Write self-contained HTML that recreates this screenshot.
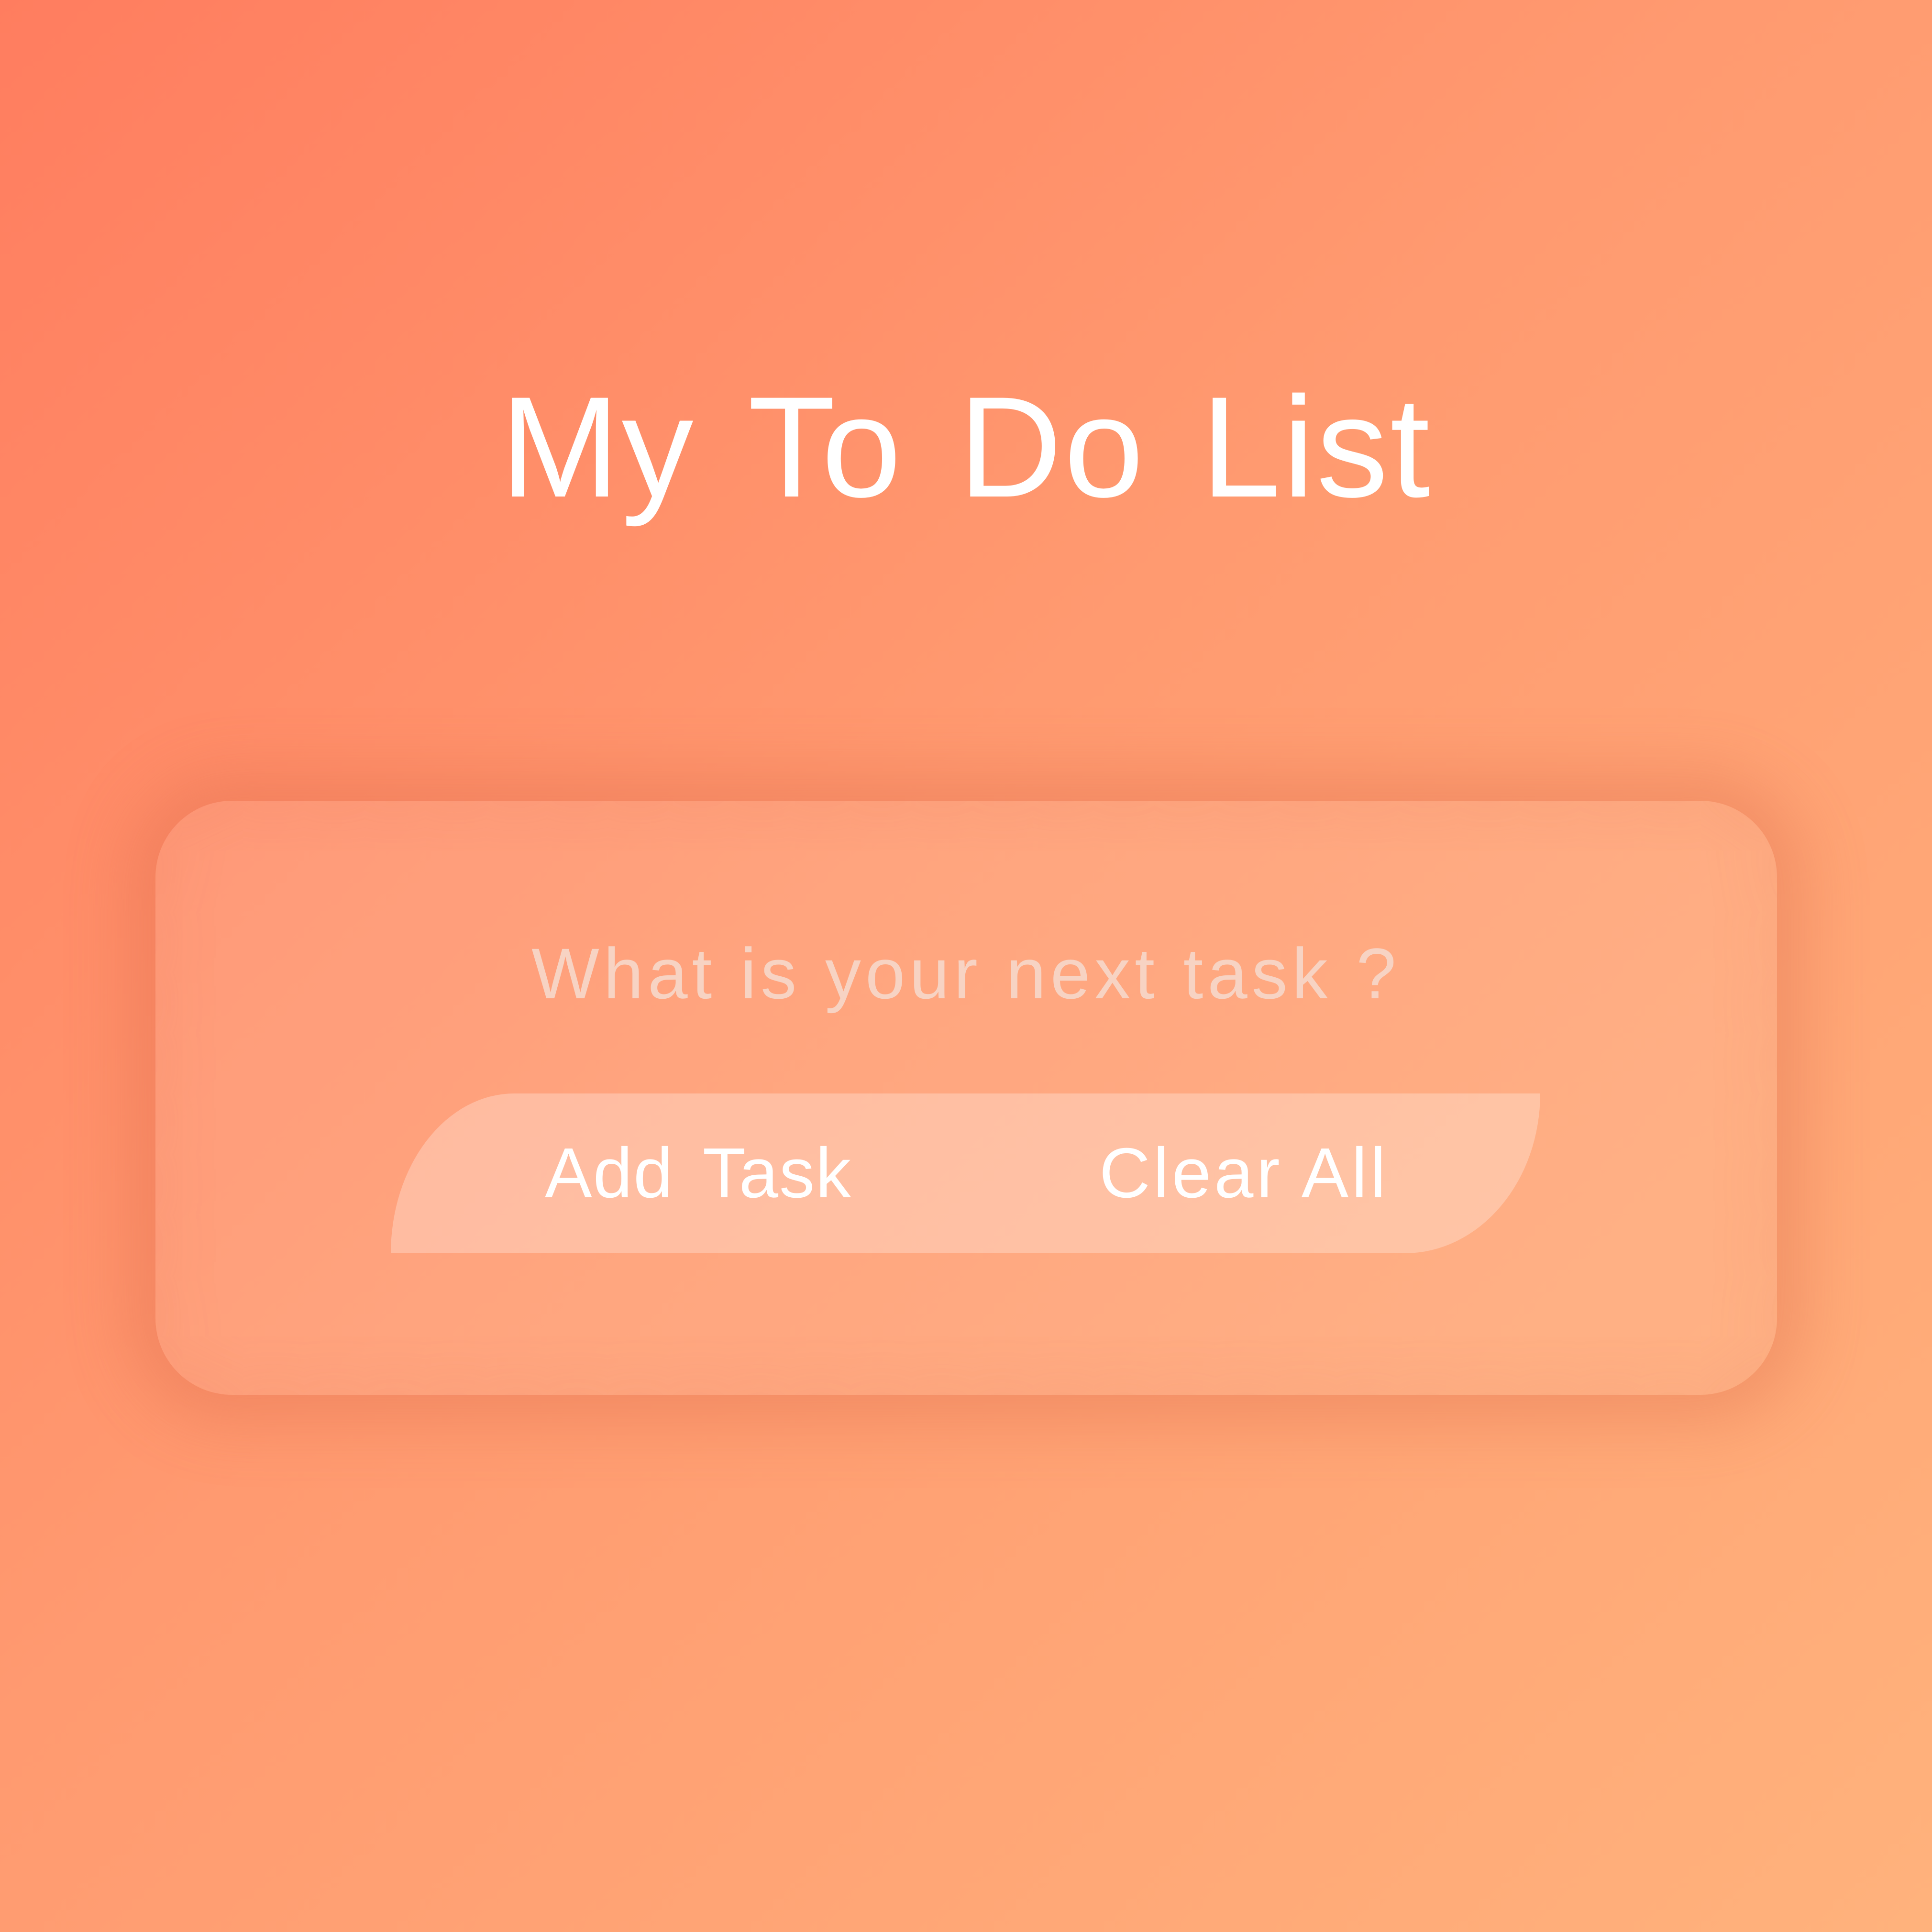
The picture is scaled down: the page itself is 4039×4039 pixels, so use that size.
<!DOCTYPE html>
<html><head><meta charset="utf-8"><style>
html,body{margin:0;padding:0;}
body{width:4039px;height:4039px;position:relative;overflow:hidden;background:linear-gradient(135deg,#ff7d5f 0%,#ff9a70 45%,#ffb27c 100%);font-family:"Liberation Sans",sans-serif;}
.t{position:absolute;white-space:nowrap;line-height:1;}
#title{left:0;width:4039px;text-align:center;top:784px;font-size:300px;color:#fff;letter-spacing:4px;word-spacing:28px;}
#card{position:absolute;left:325px;top:1674px;width:3390px;height:1242px;border-radius:160px;background:rgba(255,255,255,0.1);box-shadow:0 0 300px 60px rgba(215,100,70,0.3), inset 0 0 200px 20px rgba(210,110,80,0.12);}
#q{left:0;width:4039px;text-align:center;top:1960px;font-size:150px;color:#f7d3c3;letter-spacing:9px;}
#btn{position:absolute;left:817px;top:2286px;width:2403px;height:334px;background:rgba(255,255,255,0.28);border-radius:258px 0 283px 0 / 334px 0 334px 0;}
#add{left:1139px;top:2379px;font-size:148px;color:#fff;letter-spacing:2px;word-spacing:20px;}
#clr{left:2298px;top:2379px;font-size:148px;color:#fff;letter-spacing:6px;}
</style></head><body>
<div class="t" id="title">My To Do List</div>
<div id="card"></div>
<div class="t" id="q">What is your next task ?</div>
<div id="btn"></div>
<div class="t" id="add">Add Task</div>
<div class="t" id="clr">Clear All</div>
</body></html>
